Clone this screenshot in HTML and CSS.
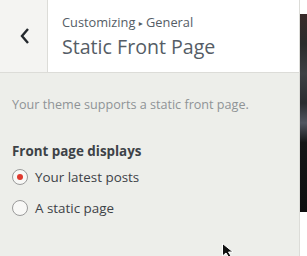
FILE: index.html
```html
<!DOCTYPE html>
<html>
<head>
<meta charset="utf-8">
<link rel="stylesheet" href="styles.css">
</head>
<body>
<div class="app">
  <div class="panel">
    <div class="header">
      <div class="back">
        <svg width="12" height="18" viewBox="0 0 12 18"><path d="M9 2 L3 9 L9 16" fill="none" stroke="#23282d" stroke-width="2.4"/></svg>
      </div>
      <div class="titles">
        <div class="crumb">Customizing <span class="sep">▸</span> General</div>
        <div class="title">Static Front Page</div>
      </div>
    </div>
    <div class="content">
      <p class="desc">Your theme supports a static front page.</p>
      <div class="label">Front page displays</div>
      <label class="radio first"><span class="dot checked"></span>Your latest posts</label>
      <label class="radio"><span class="dot"></span>A static page</label>
    </div>
  </div>
  <div class="preview"><div class="strip"></div></div>
</div>
<svg class="cursor" width="14" height="14" viewBox="0 0 14 14"><path d="M0.5 0.5 L0.5 13 L4 10 L6.5 14 L9 13 L6.5 9 L11 9 Z" fill="#111" stroke="#fff" stroke-width="1"/></svg>
</body>
</html>
```
FILE: styles.css
```css
html, body { margin: 0; padding: 0; }
body {
  width: 307px; height: 256px; overflow: hidden; position: relative;
  font-family: "Open Sans", "DejaVu Sans", sans-serif;
  background: #fff;
}
.app { display: flex; height: 256px; }
.panel {
  width: 299px; background: #edeeea; border-right: 1px solid #dcdcd8;
  display: flex; flex-direction: column;
}
.header {
  height: 72px; display: flex; background: #fff; border-bottom: 1px solid #dcdcd8;
}
.back {
  width: 47px; border-right: 1px solid #dcdcd8; background: #f4f4f2;
  display: flex; align-items: center; justify-content: center;
}
.back svg { margin-left: 2px; margin-top: 0; }
.titles { padding: 14px 0 0 14px; color: #555d66; }
.crumb { font-size: 12.8px; line-height: 16px; }
.sep { font-size: 8px; vertical-align: 1px; }
.title { font-size: 19.6px; line-height: 26px; margin-top: 3px; }
.content { padding: 0 12px; }
.desc { margin: 24px 0 0; font-size: 12.6px; color: #8f9396; line-height: 16px; }
.label { margin-top: 29px; font-size: 13.4px; font-weight: bold; color: #3d4247; line-height: 18px; }
.radio { display: flex; align-items: center; font-size: 13.4px; color: #3d4247; height: 22px; margin-top: 9px; }
.radio.first { margin-top: 6px; }
.dot {
  width: 16px; height: 16px; border: 1px solid #9a9a9a; border-radius: 50%;
  background: #f8f8f6; margin-right: 7px; box-sizing: border-box; position: relative;
}
.dot.checked::after {
  content: ""; position: absolute; left: 4px; top: 4px; width: 6px; height: 6px;
  border-radius: 50%; background: #df3a2e;
}
.preview { flex: 1; padding: 14px 0 44px; }
.strip {
  height: 100%;
  background: linear-gradient(#3a2a2a 0%, #2b2b2b 15%, #3e4044 30%, #2a2c2f 45%, #525560 55%, #141516 65%, #0e0f10 100%);
}
.cursor { position: absolute; left: 222px; top: 243px; }
```
